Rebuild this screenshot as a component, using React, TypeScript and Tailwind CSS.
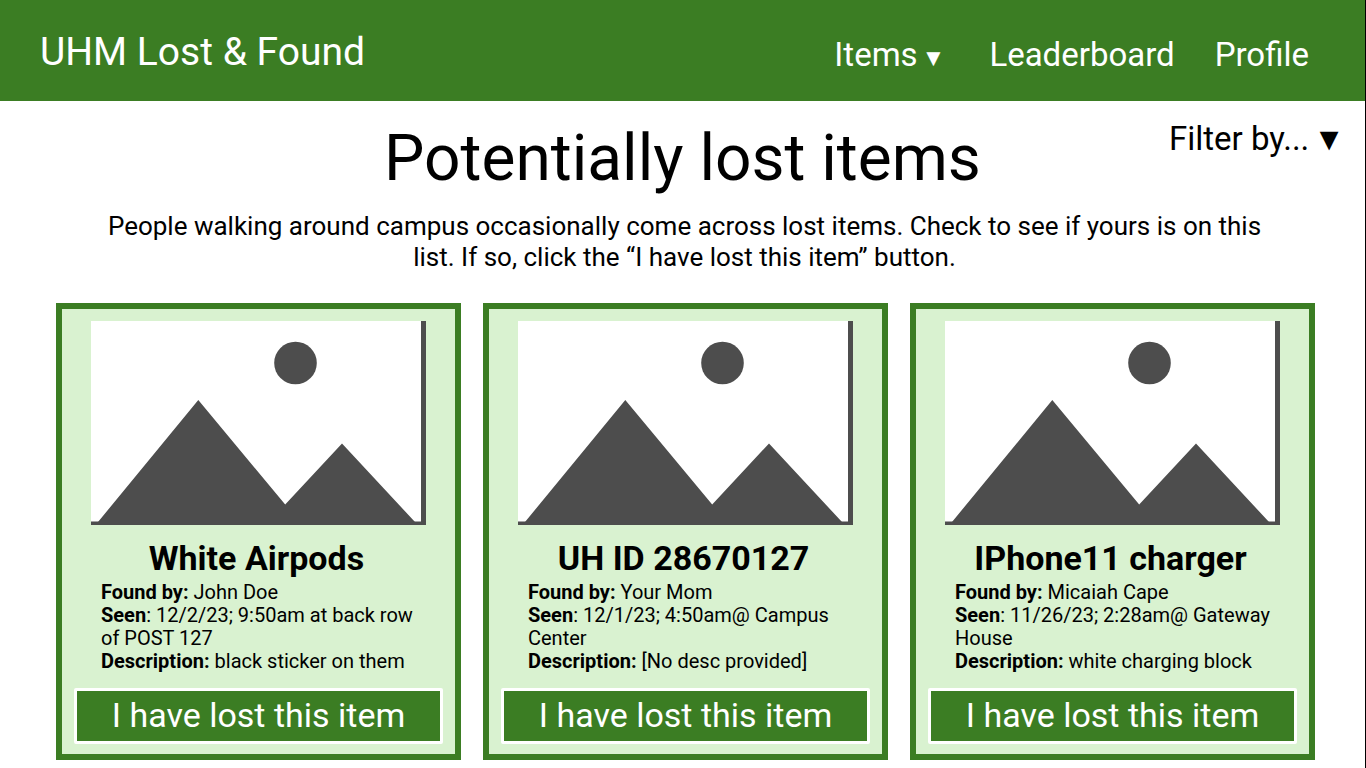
type Item = {
  title: string;
  foundBy: string;
  seen: string;
  description: string;
};

const items: Item[] = [
  {
    title: "White Airpods",
    foundBy: "John Doe",
    seen: "12/2/23; 9:50am at back row of POST 127",
    description: "black sticker on them",
  },
  {
    title: "UH ID 28670127",
    foundBy: "Your Mom",
    seen: "12/1/23; 4:50am@ Campus Center",
    description: "[No desc provided]",
  },
  {
    title: "IPhone11 charger",
    foundBy: "Micaiah Cape",
    seen: "11/26/23; 2:28am@ Gateway House",
    description: "white charging block",
  },
];

function Placeholder() {
  return (
    <svg viewBox="0 0 335 204" className="block w-full" role="img" aria-label="No photo">
      <rect width="335" height="204" fill="#fff" />
      <g fill="#4d4d4d">
        <rect x="330" width="5" height="204" />
        <rect y="200.5" width="335" height="3.5" />
        <circle cx="204.5" cy="42" r="21.3" />
        <path d="M7 201 L107.3 79 L194.2 183.5 L251 122.5 L324 201 Z" />
      </g>
    </svg>
  );
}

function Card({ item }: { item: Item }) {
  return (
    <article className="flex flex-col border-6 border-[#3b7d23] bg-[#d9f2d0] px-3 pt-3 pb-[10px]">
      <div className="px-[17px]">
        <Placeholder />
      </div>
      <h2 className="mt-3 pr-1 text-center text-[34px] leading-[42px] font-bold">{item.title}</h2>
      <div className="mt-[2px] pr-5 pl-[27px] text-[20px] leading-[23px]">
        <p>
          <b>Found by:</b> {item.foundBy}
        </p>
        <p>
          <b>Seen</b>: {item.seen}
        </p>
        <p>
          <b>Description:</b> {item.description}
        </p>
      </div>
      <button
        type="button"
        className="mt-[15px] h-14 rounded-xs border-3 border-white bg-[#3b7d23] pb-[2px] text-[34px] leading-10 text-white"
      >
        I have lost this item
      </button>
    </article>
  );
}

export default function App() {
  return (
    <div className="min-h-screen border-r border-black bg-white font-['Roboto',sans-serif] text-black">
      <header className="flex h-[101px] items-center justify-between bg-[#3b7d23] pr-14 pl-10 text-white">
        <a href="#" className="pt-[2px] text-[39px] leading-[48px]">
          UHM Lost &amp; Found
        </a>
        <nav className="flex items-baseline gap-10 pt-3 text-[33px] leading-10">
          <button type="button" aria-haspopup="menu" className="mr-1 flex items-baseline gap-1">
            Items <span className="text-[24px]">▼</span>
          </button>
          <a href="#leaderboard">Leaderboard</a>
          <a href="#profile">Profile</a>
        </nav>
      </header>
      <main className="relative pb-2">
        <button
          type="button"
          aria-haspopup="listbox"
          className="absolute top-[14px] right-5 flex items-center gap-1 text-[33px] leading-[48px]"
        >
          Filter by...
          <span className="text-[32px]">▼</span>
        </button>
        <h1 className="pt-[18px] text-center text-[64px] leading-[80px]">Potentially lost items</h1>
        <p className="mx-auto mt-3 max-w-[1180px] pl-1 text-center text-[26px] leading-[31px]">
          People walking around campus occasionally come across lost items. Check to see if yours is on this list. If so,
          click the “I have lost this item” button.
        </p>
        <section className="mt-[30px] grid grid-cols-3 gap-[22px] pr-[50px] pl-14">
          {items.map((item) => (
            <Card key={item.title} item={item} />
          ))}
        </section>
      </main>
    </div>
  );
}
